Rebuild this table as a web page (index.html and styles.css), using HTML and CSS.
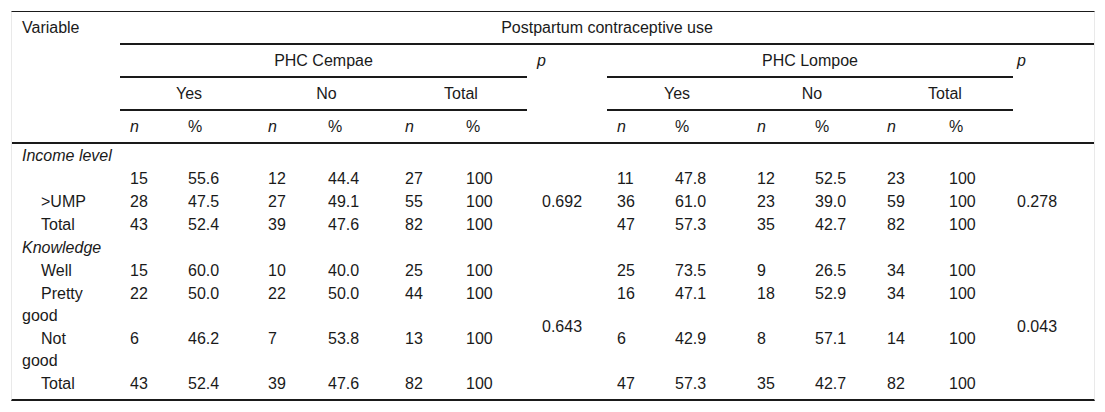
FILE: index.html
```html
<!DOCTYPE html>
<html lang="en">
<head>
<meta charset="utf-8">
<title>Postpartum contraceptive use</title>
<link rel="stylesheet" href="styles.css">
</head>
<body>
<div class="wrap">
<table class="tbl">
<colgroup>
<col class="c-var">
<col class="c58"><col class="c80"><col class="c60"><col class="c77"><col class="c61"><col class="c71">
<col class="c-p1">
<col class="c58"><col class="c82"><col class="c58"><col class="c72"><col class="c62"><col class="c74">
<col class="c-p2">
</colgroup>
<thead>
<tr>
<th class="hb" rowspan="4">Variable</th>
<th class="hb center" colspan="14">Postpartum contraceptive use</th>
</tr>
<tr>
<th class="hb center" colspan="6">PHC Cempae</th>
<th class="hb it" rowspan="3">p</th>
<th class="hb center" colspan="6">PHC Lompoe</th>
<th class="hb it p2" rowspan="3">p</th>
</tr>
<tr>
<th class="hb center" colspan="2">Yes</th>
<th class="hb center" colspan="2">No</th>
<th class="hb center" colspan="2">Total</th>
<th class="hb center" colspan="2">Yes</th>
<th class="hb center" colspan="2">No</th>
<th class="hb center" colspan="2">Total</th>
</tr>
<tr>
<th class="hb it">n</th><th class="hb">%</th>
<th class="hb it">n</th><th class="hb">%</th>
<th class="hb it">n</th><th class="hb">%</th>
<th class="hb it">n</th><th class="hb">%</th>
<th class="hb it">n</th><th class="hb">%</th>
<th class="hb it">n</th><th class="hb">%</th>
</tr>
</thead>
<tbody>
<tr class="cat">
<td class="it" colspan="15">Income level</td>
</tr>
<tr>
<td class="lbl"></td>
<td>15</td><td>55.6</td><td>12</td><td>44.4</td><td>27</td><td>100</td>
<td class="pv p1" rowspan="3">0.692</td>
<td>11</td><td>47.8</td><td>12</td><td>52.5</td><td>23</td><td>100</td>
<td class="pv p2" rowspan="3">0.278</td>
</tr>
<tr>
<td class="lbl">&gt;UMP</td>
<td>28</td><td>47.5</td><td>27</td><td>49.1</td><td>55</td><td>100</td>
<td>36</td><td>61.0</td><td>23</td><td>39.0</td><td>59</td><td>100</td>
</tr>
<tr>
<td class="lbl">Total</td>
<td>43</td><td>52.4</td><td>39</td><td>47.6</td><td>82</td><td>100</td>
<td>47</td><td>57.3</td><td>35</td><td>42.7</td><td>82</td><td>100</td>
</tr>
<tr class="cat">
<td class="it" colspan="15">Knowledge</td>
</tr>
<tr>
<td class="lbl">Well</td>
<td>15</td><td>60.0</td><td>10</td><td>40.0</td><td>25</td><td>100</td>
<td class="pv p1" rowspan="4">0.643</td>
<td>25</td><td>73.5</td><td>9</td><td>26.5</td><td>34</td><td>100</td>
<td class="pv p2" rowspan="4">0.043</td>
</tr>
<tr>
<td class="lbl">Pretty<br>good</td>
<td>22</td><td>50.0</td><td>22</td><td>50.0</td><td>44</td><td>100</td>
<td>16</td><td>47.1</td><td>18</td><td>52.9</td><td>34</td><td>100</td>
</tr>
<tr>
<td class="lbl">Not<br>good</td>
<td>6</td><td>46.2</td><td>7</td><td>53.8</td><td>13</td><td>100</td>
<td>6</td><td>42.9</td><td>8</td><td>57.1</td><td>14</td><td>100</td>
</tr>
<tr>
<td class="lbl">Total</td>
<td>43</td><td>52.4</td><td>39</td><td>47.6</td><td>82</td><td>100</td>
<td>47</td><td>57.3</td><td>35</td><td>42.7</td><td>82</td><td>100</td>
</tr>
</tbody>
</table>
</div>
</body>
</html>
```
FILE: styles.css
```css
html, body {
  margin: 0;
  padding: 0;
  background: #ffffff;
}

body {
  font-family: "Liberation Sans", Arial, sans-serif;
  font-size: 16px;
  color: #1a1a1a;
}

.wrap {
  margin: 11px 0 0 11px;
  width: 1082px;
  border-left: 1px solid #e9e9e9;
  border-right: 1px solid #e9e9e9;
  border-top: 1px solid #1a1a1a;
  border-bottom: 2px solid #1a1a1a;
  padding-bottom: 4px;
}

.tbl {
  width: 1082px;
  table-layout: fixed;
  border-collapse: separate;
  border-spacing: 0;
}

.c-var { width: 108px; }
.c58 { width: 58px; }
.c60 { width: 60px; }
.c61 { width: 61px; }
.c62 { width: 62px; }
.c71 { width: 71px; }
.c72 { width: 72px; }
.c74 { width: 74px; }
.c77 { width: 77px; }
.c80 { width: 80px; }
.c82 { width: 82px; }
.c-p1 { width: 80px; }
.c-p2 { width: 81px; }

th, td {
  text-align: left;
  vertical-align: top;
  font-weight: normal;
  padding: 0 10px;
  white-space: nowrap;
}

thead th {
  padding-top: 5px;
  padding-bottom: 4px;
  line-height: 22px;
}

.hb {
  border-bottom: 2px solid #1a1a1a;
}

.center {
  text-align: center;
}

.it {
  font-style: italic;
}

tbody td {
  line-height: 22px;
  padding-top: 0.5px;
  padding-bottom: 0.5px;
}

tbody td.lbl {
  text-indent: 19px;
  white-space: normal;
}

tbody td.pv {
  vertical-align: middle;
}

tbody td.p1 {
  padding-left: 15px;
}

th.p2,
td.p2 {
  padding-left: 4px;
}
```
